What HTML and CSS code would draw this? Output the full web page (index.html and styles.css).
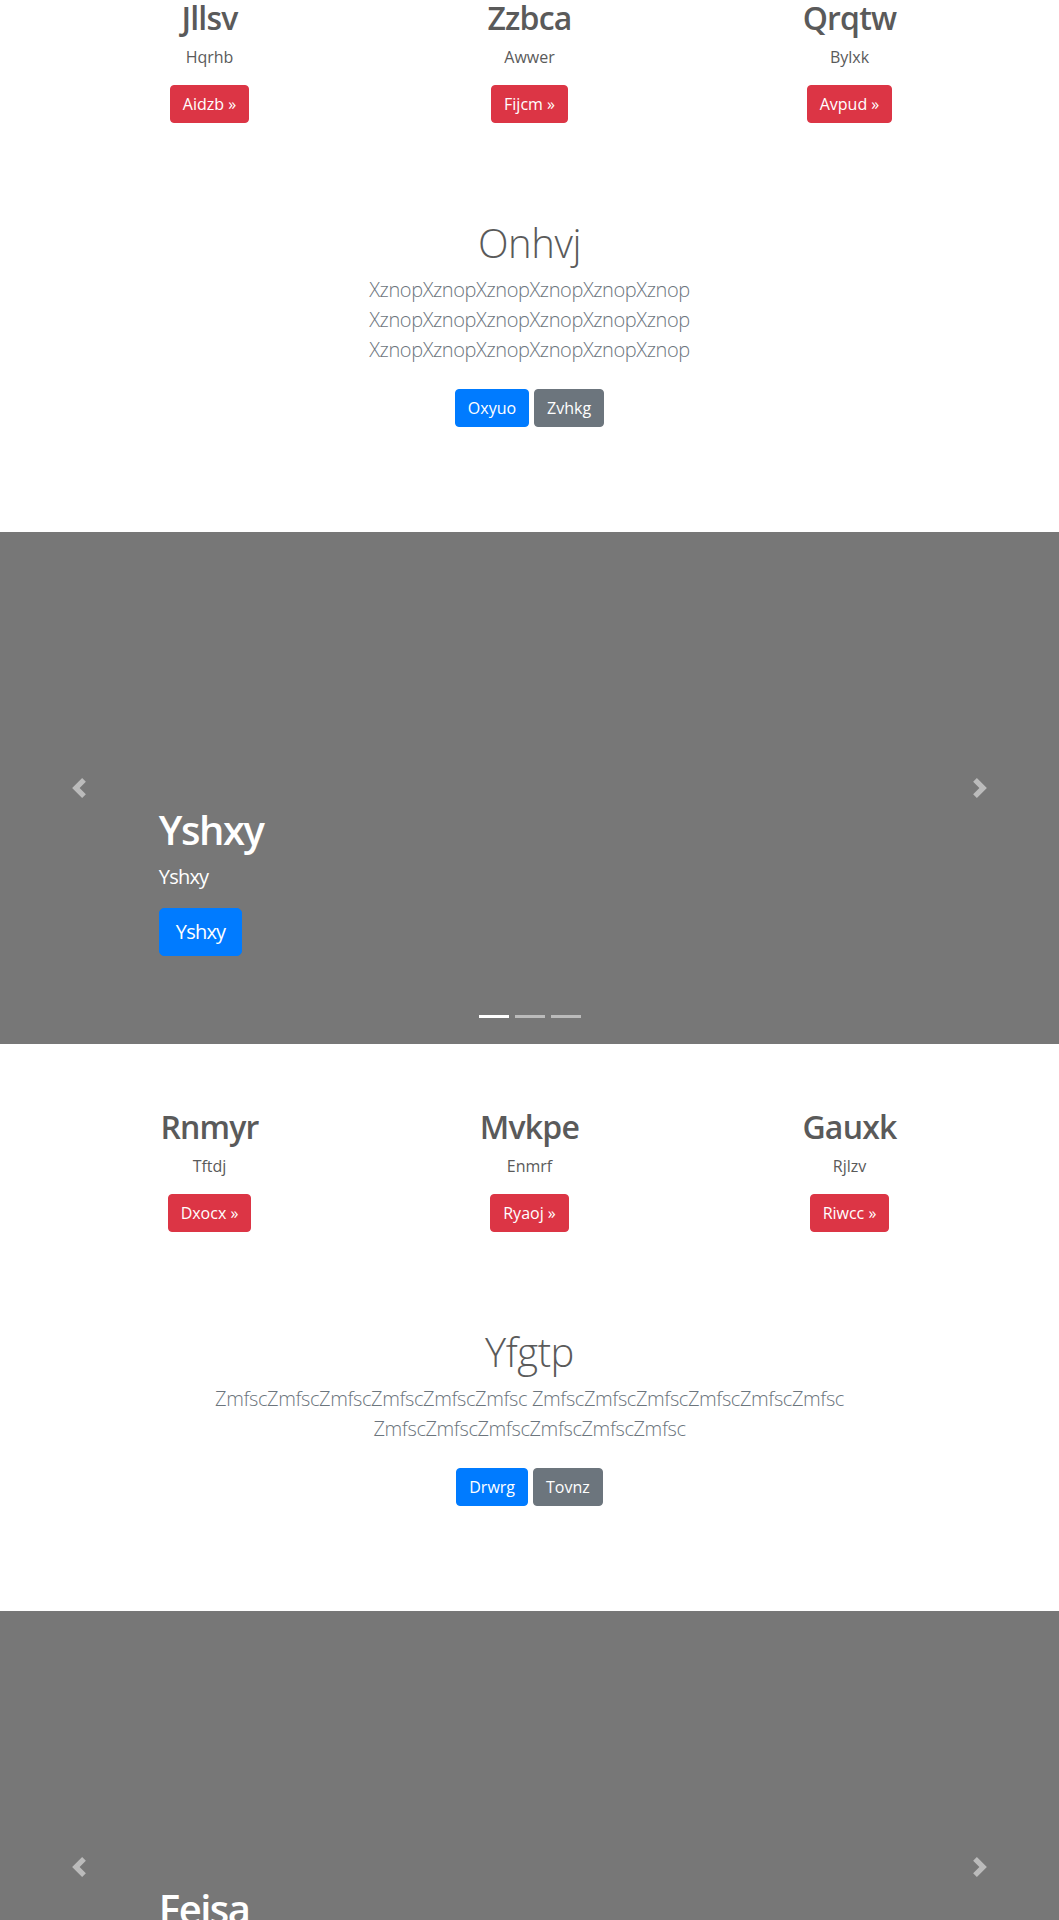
FILE: index.html
```html
<!DOCTYPE html>
<html lang="en">
<head>
<meta charset="utf-8">
<title>Carousel</title>
<link rel="stylesheet" href="styles.css">
</head>
<body>
<main class="page">
  <section class="block block--first">
    <div class="marketing">
      <div class="col">
        <h2 class="col-title">Jllsv</h2>
        <p class="col-text">Hqrhb</p>
        <p class="col-action"><a class="btn btn-danger" href="#">Aidzb &raquo;</a></p>
      </div>
      <div class="col">
        <h2 class="col-title">Zzbca</h2>
        <p class="col-text">Awwer</p>
        <p class="col-action"><a class="btn btn-danger" href="#">Fijcm &raquo;</a></p>
      </div>
      <div class="col">
        <h2 class="col-title">Qrqtw</h2>
        <p class="col-text">Bylxk</p>
        <p class="col-action"><a class="btn btn-danger" href="#">Avpud &raquo;</a></p>
      </div>
    </div>
    <div class="feature">
      <h1 class="feature-title">Onhvj</h1>
      <p class="lead">XznopXznopXznopXznopXznopXznop XznopXznopXznopXznopXznopXznop XznopXznopXznopXznopXznopXznop</p>
      <p class="feature-actions"><a class="btn btn-primary" href="#">Oxyuo</a><a class="btn btn-secondary" href="#">Zvhkg</a></p>
    </div>
  </section>

  <section class="carousel">
    <ol class="carousel-indicators">
      <li class="active"></li>
      <li></li>
      <li></li>
    </ol>
    <div class="carousel-caption">
      <h1 class="caption-title">Yshxy</h1>
      <p class="caption-text">Yshxy</p>
      <p class="caption-action"><a class="btn btn-lg btn-primary" href="#">Yshxy</a></p>
    </div>
    <a class="carousel-control carousel-control--prev" href="#">
      <svg class="carousel-icon" viewBox="0 0 8 8"><path fill="#fff" d="M5.25 0l-4 4 4 4 1.5-1.5-2.5-2.5 2.5-2.5-1.5-1.5z"/></svg>
    </a>
    <a class="carousel-control carousel-control--next" href="#">
      <svg class="carousel-icon" viewBox="0 0 8 8"><path fill="#fff" d="M2.75 0l-1.5 1.5 2.5 2.5-2.5 2.5 1.5 1.5 4-4-4-4z"/></svg>
    </a>
  </section>

  <section class="block">
    <div class="marketing">
      <div class="col">
        <h2 class="col-title">Rnmyr</h2>
        <p class="col-text">Tftdj</p>
        <p class="col-action"><a class="btn btn-danger" href="#">Dxocx &raquo;</a></p>
      </div>
      <div class="col">
        <h2 class="col-title">Mvkpe</h2>
        <p class="col-text">Enmrf</p>
        <p class="col-action"><a class="btn btn-danger" href="#">Ryaoj &raquo;</a></p>
      </div>
      <div class="col">
        <h2 class="col-title">Gauxk</h2>
        <p class="col-text">Rjlzv</p>
        <p class="col-action"><a class="btn btn-danger" href="#">Riwcc &raquo;</a></p>
      </div>
    </div>
    <div class="feature">
      <h1 class="feature-title">Yfgtp</h1>
      <p class="lead">ZmfscZmfscZmfscZmfscZmfscZmfsc ZmfscZmfscZmfscZmfscZmfscZmfsc ZmfscZmfscZmfscZmfscZmfscZmfsc</p>
      <p class="feature-actions"><a class="btn btn-primary" href="#">Drwrg</a><a class="btn btn-secondary" href="#">Tovnz</a></p>
    </div>
  </section>

  <section class="carousel">
    <ol class="carousel-indicators">
      <li class="active"></li>
      <li></li>
      <li></li>
    </ol>
    <div class="carousel-caption">
      <h1 class="caption-title">Feisa</h1>
      <p class="caption-text">Feisa</p>
      <p class="caption-action"><a class="btn btn-lg btn-primary" href="#">Feisa</a></p>
    </div>
    <a class="carousel-control carousel-control--prev" href="#">
      <svg class="carousel-icon" viewBox="0 0 8 8"><path fill="#fff" d="M5.25 0l-4 4 4 4 1.5-1.5-2.5-2.5 2.5-2.5-1.5-1.5z"/></svg>
    </a>
    <a class="carousel-control carousel-control--next" href="#">
      <svg class="carousel-icon" viewBox="0 0 8 8"><path fill="#fff" d="M2.75 0l-1.5 1.5 2.5 2.5-2.5 2.5 1.5 1.5 4-4-4-4z"/></svg>
    </a>
  </section>
</main>
</body>
</html>
```

FILE: styles.css
```css
* {
  box-sizing: border-box;
}

html,
body {
  margin: 0;
  padding: 0;
}

body {
  font-family: "Open Sans", "Noto Sans", sans-serif;
  font-size: 16px;
  line-height: 1.5;
  color: #5a5a5a;
  background: #fff;
}

.page {
  overflow: hidden;
}

.block {
  padding-top: 64px;
}

.block--first {
  margin-top: -65px;
}

.marketing {
  width: 960px;
  margin: 0 auto;
  display: grid;
  grid-template-columns: repeat(3, 1fr);
  text-align: center;
}

.col-title {
  margin: 0 0 8px;
  font-size: 32px;
  line-height: 1.2;
  font-weight: 600;
  letter-spacing: -0.8px;
}

.col-text {
  margin: 0 0 16px;
}

.col-action {
  margin: 0;
  display: flex;
  justify-content: center;
}

.btn {
  display: inline-block;
  padding: 6px 12px;
  font-size: 16px;
  line-height: 24px;
  border: 1px solid transparent;
  border-radius: 4px;
  color: #fff;
  text-decoration: none;
  white-space: nowrap;
}

.btn-danger {
  background: #dc3545;
  border-color: #dc3545;
}

.btn-primary {
  background: #007bff;
  border-color: #007bff;
}

.btn-secondary {
  background: #6c757d;
  border-color: #6c757d;
}

.btn-lg {
  padding: 8px 16px;
  font-size: 20px;
  line-height: 30px;
  border-radius: 5px;
  letter-spacing: -0.8px;
}

.feature {
  max-width: 660px;
  margin: 0 auto;
  padding: 96px 15px 104.6px;
  text-align: center;
}

.feature-title {
  margin: 0 0 8px;
  font-size: 40px;
  line-height: 1.2;
  font-weight: 300;
  letter-spacing: -0.4px;
}

.lead {
  margin: 0;
  font-size: 20px;
  line-height: 1.5;
  font-weight: 300;
  letter-spacing: -0.4px;
  color: #6c757d;
}

.feature-actions {
  margin: 0;
  padding-top: 24px;
  display: flex;
  justify-content: center;
  gap: 5px;
}

.carousel {
  position: relative;
  height: 512px;
  background: #777;
}

.carousel-control {
  position: absolute;
  top: 0;
  bottom: 0;
  width: 15%;
  display: flex;
  align-items: center;
  justify-content: center;
  opacity: 0.5;
}

.carousel-control--prev {
  left: 0;
}

.carousel-control--next {
  right: 0;
}

.carousel-icon {
  width: 20px;
  height: 20px;
}

.carousel-caption {
  position: absolute;
  left: 15%;
  right: 15%;
  bottom: 52px;
  padding: 20px 0;
  color: #fff;
}

.caption-title {
  margin: 0 0 8px;
  font-size: 40px;
  line-height: 1.2;
  font-weight: 600;
  letter-spacing: -1.5px;
}

.caption-text {
  margin: 0 0 16px;
  font-size: 20px;
  line-height: 1.5;
  letter-spacing: -0.8px;
}

.caption-action {
  margin: 0 0 16px;
  display: flex;
}

.carousel-indicators {
  position: absolute;
  left: 15%;
  right: 15%;
  bottom: 26px;
  display: flex;
  justify-content: center;
  gap: 6px;
  margin: 0;
  padding: 0;
  list-style: none;
}

.carousel-indicators li {
  width: 30px;
  height: 3px;
  background: #fff;
  opacity: 0.5;
}

.carousel-indicators li.active {
  opacity: 1;
}
```
